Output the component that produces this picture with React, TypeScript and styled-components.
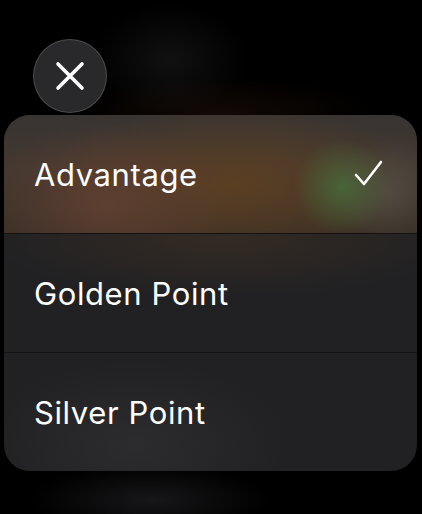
import styled, { createGlobalStyle } from "styled-components"

const GlobalStyle = createGlobalStyle`
  html, body {
    margin: 0;
    padding: 0;
    background: #000;
  }
  body {
    font-family: Inter, "Noto Sans", "Liberation Sans", sans-serif;
    -webkit-font-smoothing: antialiased;
  }
`

interface Option {
  label: string
  selected?: boolean
}

const options: Option[] = [
  { label: "Advantage", selected: true },
  { label: "Golden Point" },
  { label: "Silver Point" },
]

const Screen = styled.div`
  width: 422px;
  height: 514px;
  overflow: hidden;
  display: flex;
  flex-direction: column;
  background:
    radial-gradient(ellipse 170px 50px at 150px 500px, rgba(38, 38, 42, 0.6), transparent 70%),
    radial-gradient(ellipse 220px 50px at 220px 112px, rgba(50, 26, 14, 0.35), transparent 70%),
    radial-gradient(ellipse 110px 80px at 170px 60px, rgba(28, 28, 30, 0.6), transparent 70%),
    #000;
`

const CloseButton = styled.button`
  width: 74px;
  height: 74px;
  margin: 39px 0 2px 33px;
  padding: 0;
  border-radius: 50%;
  border: 1.5px solid rgba(255, 255, 255, 0.16);
  background: #29292b;
  display: flex;
  align-items: center;
  justify-content: center;
  flex-shrink: 0;
`

const Card = styled.div`
  margin: 0 5px 0 4px;
  border-radius: 26px;
  overflow: hidden;
  display: flex;
  flex-direction: column;
  background:
    radial-gradient(ellipse 240px 60px at 220px 122px, rgba(70, 52, 36, 0.5), transparent 100%),
    radial-gradient(ellipse 220px 120px at 130px 330px, rgba(50, 50, 54, 0.65), transparent 70%),
    #212123;
`

const Row = styled.div<{ $selected?: boolean }>`
  height: 118px;
  display: flex;
  align-items: center;
  justify-content: space-between;
  padding: 0 32px 0 30px;
  box-sizing: border-box;
  & + & {
    border-top: 1.5px solid #121213;
    height: 119px;
  }
  background: ${(p) =>
    p.$selected
      ? `radial-gradient(circle 48px at 338px 72px, rgba(72, 108, 58, 0.85), transparent 100%),
         radial-gradient(circle 55px at 385px 78px, rgba(100, 100, 92, 0.45), transparent 100%),
         radial-gradient(ellipse 130px 80px at 100px 90px, rgba(98, 64, 50, 0.85), transparent 100%),
         radial-gradient(ellipse 190px 80px at 230px 70px, rgba(96, 64, 32, 0.85), transparent 100%),
         linear-gradient(180deg, #383432 0%, #423830 45%, #382e26 100%)`
      : "transparent"};
`

const Label = styled.span`
  color: #fff;
  font-size: 31px;
  font-weight: 400;
  letter-spacing: 0.6px;
`

const Check = () => (
  <svg width="32" height="32" viewBox="0 0 32 32" fill="none">
    <path
      d="M3 17 L11 26 L28 4"
      stroke="#fff"
      strokeWidth="2.6"
      strokeLinecap="round"
      strokeLinejoin="round"
    />
  </svg>
)

const XIcon = () => (
  <svg width="30" height="30" viewBox="0 0 30 30" fill="none">
    <path d="M3 3 L27 27 M27 3 L3 27" stroke="#fff" strokeWidth="3.6" strokeLinecap="round" />
  </svg>
)

export default function App() {
  return (
    <>
      <GlobalStyle />
      <Screen>
        <CloseButton aria-label="Close">
          <XIcon />
        </CloseButton>
        <Card>
          {options.map((o) => (
            <Row key={o.label} $selected={o.selected}>
              <Label>{o.label}</Label>
              {o.selected && <Check />}
            </Row>
          ))}
        </Card>
      </Screen>
    </>
  )
}
